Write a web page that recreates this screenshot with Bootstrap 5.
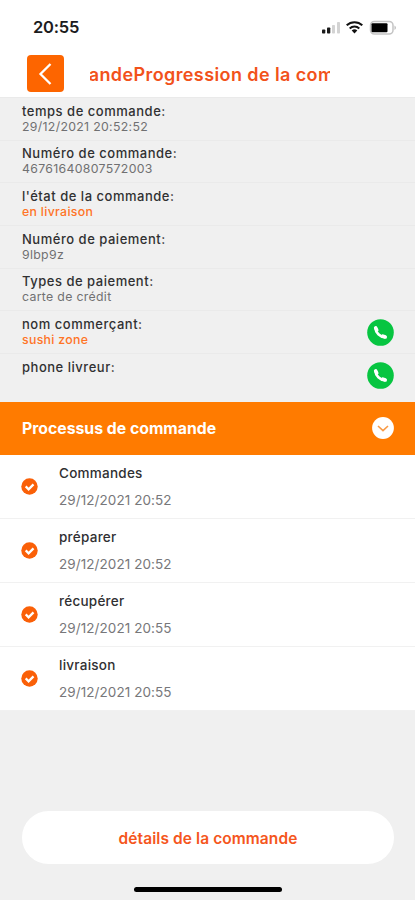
<!DOCTYPE html>
<html lang="fr">
<head>
<meta charset="utf-8">
<meta name="viewport" content="width=device-width, initial-scale=1">
<title>Progression de la commande</title>
<link href="https://cdn.jsdelivr.net/npm/bootstrap@5.3.0/dist/css/bootstrap.min.css" rel="stylesheet">
<style>
  body { font-family: Inter, "Liberation Sans", sans-serif; background: #f0f0f0; color: #303032; }
  .screen { height: 900px; }
  .status-bar { height: 55px; padding: 0 18px 2px 33px; }
  .clock { font-size: 16.5px; font-weight: 600; line-height: 53px; padding-top: 2px; color: #1c1c1e; letter-spacing: -.2px; }
  .title-bar { height: 42px; padding-left: 27px; }
  .back-btn { width: 37px; height: 37px; border-radius: 4px; background: #fd6500; }
  .marquee-title { width: 240px; margin-left: 26px; height: 37px; line-height: 39px; font-size: 18px; font-weight: 600; letter-spacing: .4px; color: #f2521b; }
  .lead-out { width: 43.5px; }
  .info-row { height: 42.7px; padding: 5px 21px 0 22px; border-top: 1px solid #eaeaea; }
  .info-row:last-child { height: 48.8px; }
  .info-label { font-size: 13px; line-height: 16px; font-weight: 500; letter-spacing: .52px; margin-top: -.5px; }
  .info-value { font-size: 12.3px; line-height: 16px; letter-spacing: .32px; color: #707072; }
  .accent { color: #ff7426; font-weight: 500; }
  .call { margin-top: 2.5px; }
  .process-head { height: 53px; padding: 0 21px 0 22px; background: #ff7b00; font-size: 15.8px; font-weight: 700; }
  .process-head span { padding-top: 1px; }
  .step { height: 64px; padding-left: 21px; border-bottom: 1px solid #f1f1f1; }
  .step-text { margin-left: 21px; }
  .step-name { font-size: 13.5px; line-height: 20px; letter-spacing: .25px; font-weight: 500; }
  .step-time { font-size: 13.5px; line-height: 20px; margin-top: 7px; letter-spacing: .08px; color: #77777a; }
  .details-btn { height: 53px; margin: 0 21px 23px 22px; padding-top: 8px; font-size: 15.5px; font-weight: 600; letter-spacing: .08px; color: #f5561c; }
  .home-bar { width: 148px; height: 5px; margin-bottom: 8px; background: #000; }
</style>
<script src="https://cdn.jsdelivr.net/npm/bootstrap@5.3.0/dist/js/bootstrap.bundle.min.js"></script>
</head>
<body>
<svg class="d-none">
  <symbol id="phone" viewBox="0 0 27 27"><circle cx="13.5" cy="13.5" r="13.3" fill="#07c541"/><path d="M8.500 9c0 4.500 4.500 9 9.500 9.200" fill="none" stroke="#fff" stroke-width="2.600"/><path d="M8.700 8.900l1 2.100M15.900 17.100l2.300.9" fill="none" stroke="#fff" stroke-width="3.600" stroke-linecap="round"/></symbol>
  <symbol id="check" viewBox="0 0 17 17"><circle cx="8.500" cy="8.500" r="8.200" fill="#fa6008"/><path d="M4.700 8.400l2.900 2.900 4.900-4.900" fill="none" stroke="#fff" stroke-width="2.300"/></symbol>
</svg>
<div class="screen d-flex flex-column">
  <header class="bg-white">
    <div class="status-bar d-flex justify-content-between align-items-center">
      <span class="clock">20:55</span>
      <svg width="76" height="18" viewBox="0 0 76 18">
        <g fill="#1a1a1a"><rect x="1" y="11.500" width="3.300" height="4" rx=".8"/><rect x="6" y="9.500" width="3.300" height="6" rx=".8"/></g>
        <g fill="#d3d3d3"><rect x="11" y="7" width="3" height="8.500" rx=".8"/><rect x="16" y="4" width="3" height="11.500" rx=".8"/></g>
        <g fill="none" stroke="#111" stroke-width="2"><path d="M25.700 7.300a11.400 11.400 0 0 1 15.600 0M28.700 10.400a7 7 0 0 1 9.600 0"/></g>
        <path d="M30.700 12.500a4.200 4.200 0 0 1 5.600 0l-2.800 2.900z" fill="#111"/>
        <rect x="49.500" y="3.500" width="22.500" height="12.500" rx="3.800" fill="none" stroke="#c4c4c4" stroke-width="1.500"/>
        <path d="M73.500 7.500c1.900.8 1.900 3.700 0 4.500z" fill="#bbb"/>
        <rect x="50.500" y="5.300" width="16" height="9" rx="1"/>
      </svg>
    </div>
    <div class="title-bar d-flex">
      <button class="back-btn btn p-0 border-0 d-flex align-items-center justify-content-center" aria-label="Retour">
        <svg width="37" height="37" viewBox="0 0 37 37" fill="none" stroke="#fff" stroke-width="2.300"><path d="M23.500 9L13.500 19 23.500 29"/></svg>
      </button>
      <div class="marquee-title d-flex overflow-hidden text-nowrap"><div class="lead-out d-flex flex-shrink-0 justify-content-end overflow-hidden"><span>ande</span></div><span>Progression de la commande</span></div>
    </div>
  </header>
  <section>
    <div class="info-row"><div class="info-label">temps de commande:</div><div class="info-value">29/12/2021 20:52:52</div></div>
    <div class="info-row"><div class="info-label">Numéro de commande:</div><div class="info-value">46761640807572003</div></div>
    <div class="info-row"><div class="info-label">l'état de la commande:</div><div class="info-value accent">en livraison</div></div>
    <div class="info-row"><div class="info-label">Numéro de paiement:</div><div class="info-value">9lbp9z</div></div>
    <div class="info-row"><div class="info-label">Types de paiement:</div><div class="info-value">carte de crédit</div></div>
    <div class="info-row d-flex justify-content-between"><div><div class="info-label">nom commerçant:</div><div class="info-value accent">sushi zone</div></div><svg class="call" width="27" height="27"><use href="#phone"/></svg></div>
    <div class="info-row d-flex justify-content-between"><div class="info-label">phone livreur:</div><svg class="call" width="27" height="27"><use href="#phone"/></svg></div>
  </section>
  <div class="process-head d-flex align-items-center justify-content-between text-white">
    <span>Processus de commande</span>
    <svg width="22" height="22" viewBox="0 0 22 22"><circle cx="11" cy="11" r="10.900" fill="#fff"/><path d="M6 9l5 4.600L16 9" fill="none" stroke="#f99a45" stroke-width="1.600"/></svg>
  </div>
  <section class="bg-white">
    <div class="step d-flex align-items-center"><svg width="17" height="17"><use href="#check"/></svg><div class="step-text"><div class="step-name">Commandes</div><div class="step-time">29/12/2021 20:52</div></div></div>
    <div class="step d-flex align-items-center"><svg width="17" height="17"><use href="#check"/></svg><div class="step-text"><div class="step-name">préparer</div><div class="step-time">29/12/2021 20:52</div></div></div>
    <div class="step d-flex align-items-center"><svg width="17" height="17"><use href="#check"/></svg><div class="step-text"><div class="step-name">récupérer</div><div class="step-time">29/12/2021 20:55</div></div></div>
    <div class="step d-flex align-items-center"><svg width="17" height="17"><use href="#check"/></svg><div class="step-text"><div class="step-name">livraison</div><div class="step-time">29/12/2021 20:55</div></div></div>
  </section>
  <footer class="mt-auto d-flex flex-column">
    <button class="details-btn btn bg-white border-0 rounded-pill">détails de la commande</button>
    <div class="home-bar rounded-pill align-self-center"></div>
  </footer>
</div>
</body>
</html>
